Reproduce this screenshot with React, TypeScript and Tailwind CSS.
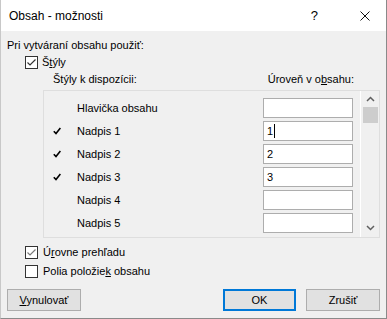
import React from "react";

const font = { fontFamily: '"Liberation Sans", Arial, sans-serif' };

function CheckBox({ checked, dim }: { checked?: boolean; dim?: boolean }) {
  return (
    <div className="flex h-[13px] w-[13px] items-center justify-center border border-[#333333] bg-white">
      {checked && (
        <svg width="11" height="11" viewBox="0 0 11 11">
          <path
            d="M1.5 5.5 L4 8 L9.5 2.5"
            fill="none"
            stroke={dim ? "#7a7a7a" : "#333333"}
            strokeWidth="1.2"
          />
        </svg>
      )}
    </div>
  );
}

const rows = [
  { name: "Hlavička obsahu", on: false, level: "" },
  { name: "Nadpis 1", on: true, level: "1", caret: true },
  { name: "Nadpis 2", on: true, level: "2" },
  { name: "Nadpis 3", on: true, level: "3" },
  { name: "Nadpis 4", on: false, level: "" },
  { name: "Nadpis 5", on: false, level: "" },
];

export default function App() {
  return (
    <div
      className="flex h-[319px] w-[387px] flex-col border-b border-l border-r border-b-[#8a8a8a] border-l-[#c8c8c8] border-r-[#8a8a8a] bg-[#f0f0f0] text-[11px] text-black"
      style={font}
    >
      {/* TITLE BAR */}
      <div className="flex h-[31px] shrink-0 items-center bg-white pl-[8px]">
        <span className="text-[12px]">Obsah - možnosti</span>
        <span className="ml-auto mr-[42px] text-[13px]">?</span>
        <svg width="10" height="10" viewBox="0 0 10 10" className="mr-[16px]">
          <path d="M0.5 0.5 L9.5 9.5 M9.5 0.5 L0.5 9.5" stroke="#111" strokeWidth="1" />
        </svg>
      </div>

      {/* BODY */}
      <div className="flex flex-1 flex-col pl-[6px] pr-[6px]">
        <div className="mt-[6px] h-[16px] leading-[16px]">Pri vytváraní obsahu použiť:</div>

        <div className="ml-[18px] mt-[2px] flex h-[15px] items-center gap-[4px]">
          <CheckBox checked />
          <span>
            Š<span className="underline">t</span>ýly
          </span>
        </div>

        <div className="mt-[1px] flex h-[16px] items-center leading-[16px]">
          <span className="ml-[46px]">Štýly k dispozícii:</span>
          <span className="ml-auto mr-[26px]">
            Úroveň v o<span className="underline">b</span>sahu:
          </span>
        </div>

        {/* LIST */}
        <div className="ml-[36px] mt-[3px] flex h-[148px] border border-[#dedede]">
          <div className="flex flex-1 flex-col gap-[3px] pt-[7px]">
            {rows.map((r) => (
              <div key={r.name} className="flex h-[20px] items-center">
                <div className="ml-[9px] w-[24px]">
                  {r.on && (
                    <svg width="8" height="8" viewBox="0 0 8 8">
                      <path d="M0.8 4.2 L3 6.6 L7.4 1" fill="none" stroke="#000" strokeWidth="1.6" />
                    </svg>
                  )}
                </div>
                <span>{r.name}</span>
                <div className="ml-auto mr-[7px] flex h-[20px] w-[90px] items-center border border-[#adadad] bg-white pl-[3px]">
                  {r.level}
                  {r.caret && <span className="ml-[1px] inline-block h-[14px] w-px bg-black" />}
                </div>
              </div>
            ))}
          </div>
          <div className="flex w-[19px] flex-col items-center border-l border-white">
            <svg width="9" height="6" viewBox="0 0 9 6" className="mt-[5px]">
              <path d="M1 5 L4.5 1.5 L8 5" fill="none" stroke="#606060" strokeWidth="1.5" />
            </svg>
            <div className="mt-[5px] h-[16px] w-[15px] bg-[#cdcdcd]" />
            <svg width="9" height="6" viewBox="0 0 9 6" className="mb-[6px] mt-auto">
              <path d="M1 1 L4.5 4.5 L8 1" fill="none" stroke="#606060" strokeWidth="1.5" />
            </svg>
          </div>
        </div>

        <div className="ml-[18px] mt-[7px] flex h-[15px] items-center gap-[5px]">
          <CheckBox checked dim />
          <span>
            Ú<span className="underline">r</span>ovne prehľadu
          </span>
        </div>
        <div className="ml-[18px] mt-[4px] flex h-[15px] items-center gap-[5px]">
          <CheckBox />
          <span>
            Polia položie<span className="underline">k</span> obsahu
          </span>
        </div>

        {/* BUTTONS */}
        <div className="mt-[10px] flex items-center">
          <button className="flex h-[22px] w-[74px] items-center justify-center border border-[#adadad] bg-[#e1e1e1]">
            <span>
              <span className="underline">V</span>ynulovať
            </span>
          </button>
          <button className="ml-auto flex h-[22px] w-[73px] items-center justify-center border-2 border-[#0078d7] bg-[#e1e1e1]">
            OK
          </button>
          <button className="ml-[10px] flex h-[22px] w-[74px] items-center justify-center border border-[#adadad] bg-[#e1e1e1]">
            Zrušiť
          </button>
        </div>
      </div>
    </div>
  );
}
